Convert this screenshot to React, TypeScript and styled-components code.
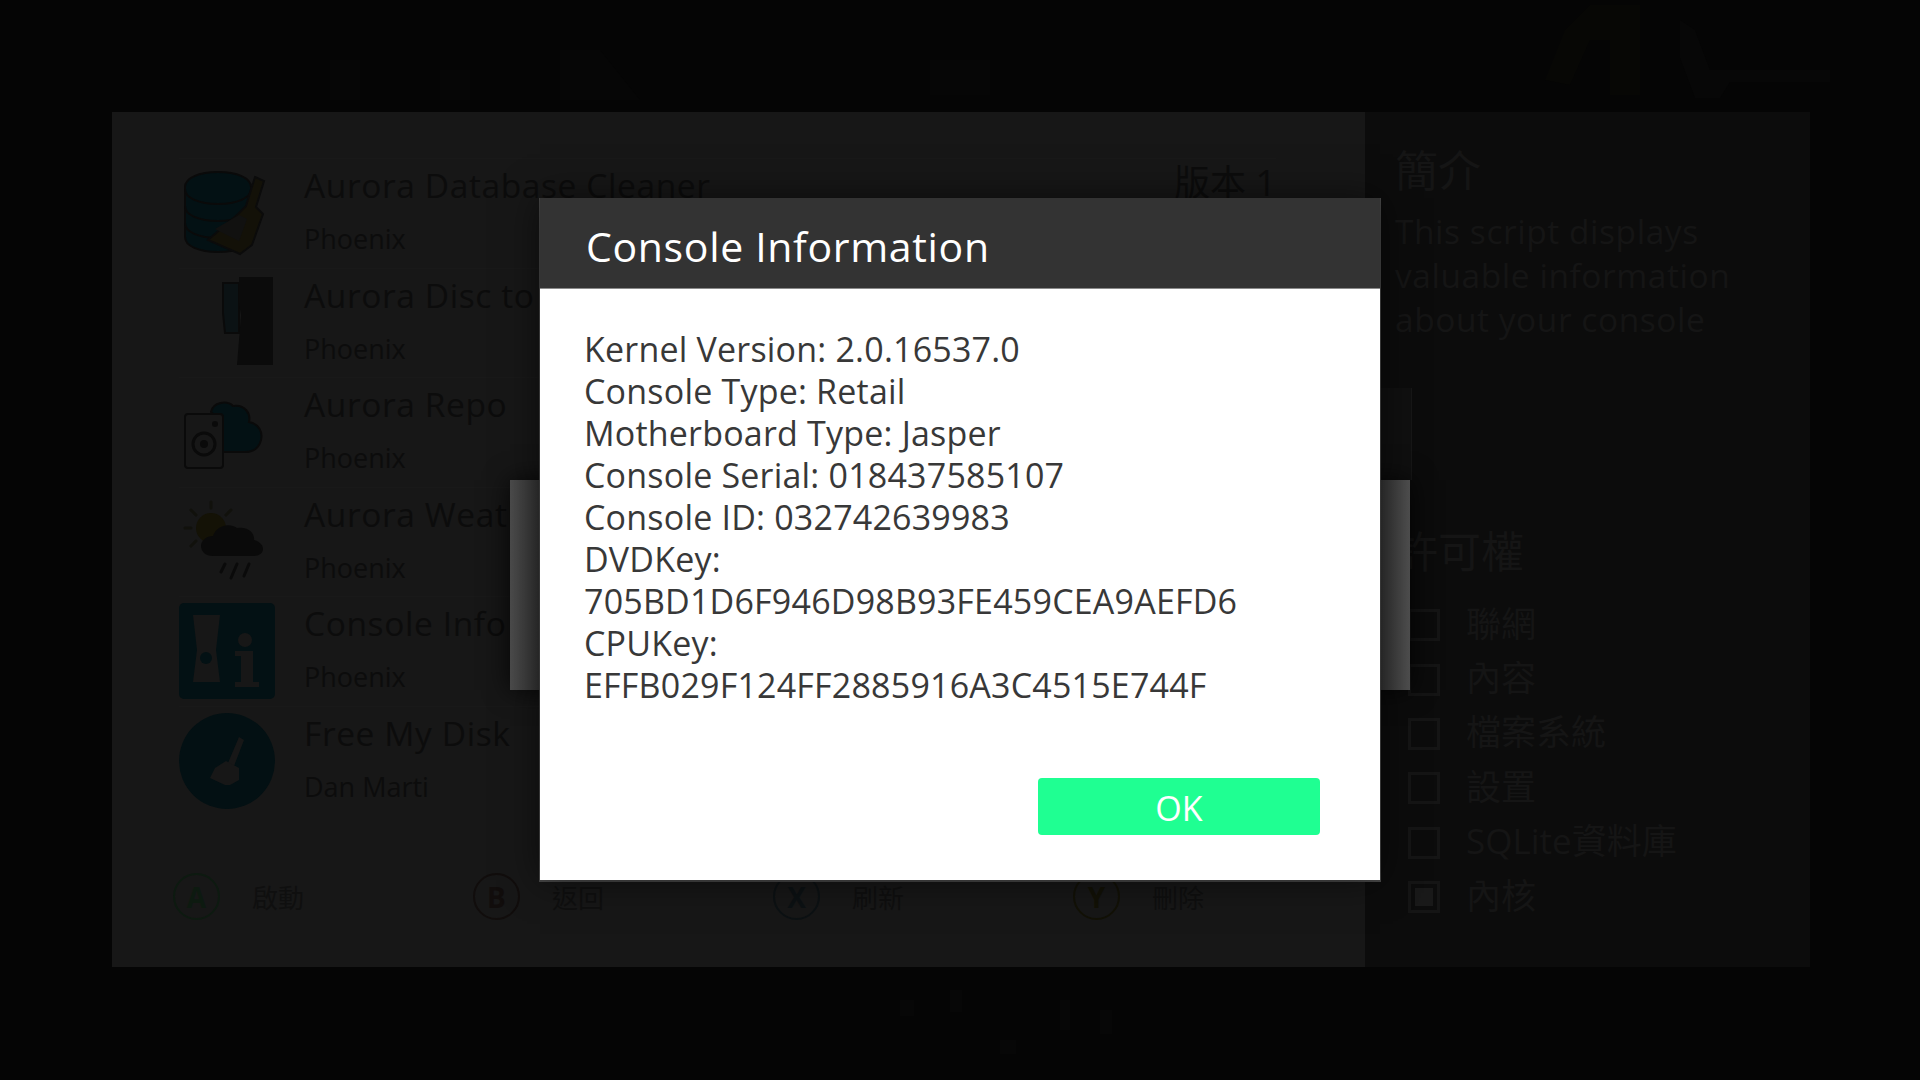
import React from "react";
import styled, { createGlobalStyle } from "styled-components";

const UI_FONT = `"Open Sans", "Noto Sans CJK TC", sans-serif`;

const GlobalStyle = createGlobalStyle`
  html, body {
    margin: 0;
    padding: 0;
    width: 1920px;
    height: 1080px;
    overflow: hidden;
    background: #040404;
  }
  #root {
    width: 1920px;
    height: 1080px;
  }
`;

const Screen = styled.div`
  position: relative;
  display: flex;
  width: 1920px;
  height: 1080px;
  box-sizing: border-box;
  padding: 112px 110px 113px 112px;
  background: #050505;
  font-family: ${UI_FONT};
  overflow: hidden;
`;

const BackdropArt = styled.svg`
  position: absolute;
  top: 0;
  left: 0;
  width: 1920px;
  height: 1080px;
`;

const ScriptsPanel = styled.section`
  position: relative;
  display: flex;
  flex-direction: column;
  width: 1253px;
  box-sizing: border-box;
  padding: 46px 89px 0 67px;
  background: #171717;
`;

const ScriptList = styled.div`
  display: flex;
  flex-direction: column;
`;

const ScriptRow = styled.div`
  display: flex;
  align-items: flex-start;
  height: 109.5px;
  box-sizing: border-box;
  border-top: 1px solid #191919;
`;

const ScriptIcon = styled.div`
  flex: none;
  width: 96px;
  height: 96px;
  margin-top: 6px;
  svg {
    display: block;
    width: 96px;
    height: 96px;
  }
`;

const ScriptText = styled.div`
  flex: 1;
  min-width: 0;
  margin-left: 29px;
`;

const ScriptTitle = styled.div`
  font-size: 33.5px;
  line-height: 52px;
  color: #0c0c0c;
  letter-spacing: 0.6px;
  white-space: nowrap;
`;

const ScriptAuthor = styled.div`
  margin-top: 2px;
  font-size: 27px;
  line-height: 52px;
  color: #0c0c0c;
`;

const ScriptVersion = styled.div`
  flex: none;
  font-size: 36px;
  line-height: 48px;
  color: #0c0c0c;
`;

const HintBar = styled.div`
  display: flex;
  flex: none;
  width: 1200px;
  margin: 58px 0 0 -6px;
`;

const Hint = styled.div`
  display: flex;
  flex: none;
  align-items: center;
  gap: 32px;
  width: 300px;
`;

const HintCircle = styled.div<{ $tint: string }>`
  display: flex;
  align-items: center;
  justify-content: center;
  width: 47px;
  height: 47px;
  box-sizing: border-box;
  border: 2px solid ${(p) => p.$tint};
  border-radius: 50%;
  color: ${(p) => p.$tint};
  font-size: 28px;
  font-weight: 700;
`;

const HintLabel = styled.span`
  font-size: 26px;
  color: #0f0f0f;
`;

const DetailsPanel = styled.aside`
  display: flex;
  flex-direction: column;
  width: 445px;
  box-sizing: border-box;
  padding: 36px 20px 0 30px;
  background: #0c0c0c;
  color: #151515;
  position: relative;
`;

const DetailsHeading = styled.h2<{ $gap?: number }>`
  margin: ${(p) => p.$gap ?? 0}px 0 0;
  font-size: 43px;
  line-height: 46px;
  font-weight: 400;
`;

const Description = styled.p`
  margin: 15px 0 0;
  font-size: 33.5px;
  line-height: 44px;
  letter-spacing: 0.55px;
  white-space: nowrap;
`;

const Permissions = styled.div`
  display: flex;
  flex-direction: column;
  margin: 22px 0 0 13px;
`;

const Permission = styled.div`
  display: flex;
  align-items: center;
  gap: 26px;
  height: 54.4px;
  font-size: 35px;
`;

const PermissionLabel = styled.span`
  line-height: 46px;
  margin-bottom: 1px;
`;

const CheckBox = styled.div<{ $on?: boolean }>`
  display: flex;
  align-items: center;
  justify-content: center;
  width: 32px;
  height: 32px;
  margin-top: 2px;
  box-sizing: border-box;
  border: 3px solid #151515;
  &::after {
    content: "";
    display: ${(p) => (p.$on ? "block" : "none")};
    width: 18px;
    height: 18px;
    background: #191919;
  }
`;

const DialogLayer = styled.div`
  position: absolute;
  top: 198px;
  left: 540px;
  z-index: 2;
`;

const GlowBand = styled.div`
  position: absolute;
  top: 282px;
  left: -30px;
  right: -30px;
  height: 210px;
  background: linear-gradient(90deg, #4c4c4c 0, #333 30px, #333 calc(100% - 30px), #4f4f4f 100%);
  box-shadow: 0 0 24px rgba(0, 0, 0, 0.75);
`;

const UpperBand = styled.div`
  position: absolute;
  top: 190px;
  left: 0;
  right: -32px;
  height: 92px;
  background: #101010;
  border-right: 1px solid #171717;
`;

const Dialog = styled.div`
  position: relative;
  display: flex;
  flex-direction: column;
  width: 840px;
  height: 682px;
  box-sizing: border-box;
  box-shadow: 0 0 36px rgba(0, 0, 0, 0.55), 0 1px 0 1px #4a4a4a;
  background: #fff;
`;

const DialogHeader = styled.header`
  display: flex;
  align-items: center;
  height: 91px;
  flex: none;
  box-sizing: border-box;
  padding: 6px 46px 0;
  background: #333;
  border-bottom: 1px solid #8a8a8a;
`;

const DialogTitle = styled.h1`
  margin: 0;
  font-size: 41px;
  line-height: 60px;
  font-weight: 400;
  color: #fff;
  letter-spacing: 0.66px;
`;

const DialogBody = styled.div`
  flex: 1;
  padding: 39px 0 0 44px;
  font-size: 34px;
  line-height: 42px;
  letter-spacing: 0.2px;
  color: #383838;
`;

const InfoLine = styled.div`
  white-space: nowrap;
`;

const DialogFooter = styled.footer`
  display: flex;
  justify-content: flex-end;
  flex: none;
  padding: 0 60px 45px 0;
`;

const OkButton = styled.button`
  width: 282px;
  height: 57px;
  padding: 3px 0 0;
  border: none;
  border-radius: 4px;
  background: #1fff92;
  color: #fff;
  font-family: ${UI_FONT};
  font-size: 34px;
  line-height: 54px;
`;

const DatabaseIcon = () => (
  <svg viewBox="0 0 96 96">
    <path d="M6 22c0-9 14-15 33-15s33 6 33 15v50c0 9-14 15-33 15S6 81 6 72z" fill="#031114" stroke="#0a0a0a" strokeWidth="2" />
    <path d="M6 24c0 9 14 15 33 15s33-6 33-15M6 41c0 9 14 15 33 15s33-6 33-15M6 58c0 9 14 15 33 15s33-6 33-15" fill="none" stroke="#0a0a0a" strokeWidth="2" />
    <path d="M76 12l9 4-8 26 7 7-11 31-12 9-32-14 30-26 8-8z" fill="#131108" stroke="#0b0b0b" strokeWidth="2" />
    <path d="M36 64l24-14 8 4-8 22z" fill="#111110" />
  </svg>
);

const DiscIcon = () => (
  <svg viewBox="0 0 96 96">
    <path d="M44 8l16 0 0 50-14 0-2-20z" fill="#0b1214" stroke="#0a0a0a" strokeWidth="2" />
    <path d="M60 2h34v88H58l4-50-2-12z" fill="#0b0b0b" />
  </svg>
);

const ReportIcon = () => (
  <svg viewBox="0 0 96 96">
    <path d="M32 28c2-10 16-12 22-6 12-2 18 8 16 16 10 2 14 10 12 18-2 8-8 12-16 12H44V40z" fill="#031114" stroke="#0a0a0a" strokeWidth="2" />
    <rect x="6" y="30" width="38" height="54" rx="3" fill="#171717" stroke="#0a0a0a" strokeWidth="2" />
    <circle cx="25" cy="60" r="11" fill="none" stroke="#0a0a0a" strokeWidth="3" />
    <circle cx="25" cy="60" r="4" fill="#0a0a0a" />
    <circle cx="36" cy="40" r="3" fill="#0a0a0a" />
  </svg>
);

const WeatherIcon = () => (
  <svg viewBox="0 0 96 96">
    <circle cx="32" cy="34" r="15" fill="#141206" />
    <g stroke="#11110c" strokeWidth="3" strokeLinecap="round">
      <path d="M32 8v6M12 16l5 5M6 34h6M12 52l5-5M52 16l-5 5" />
    </g>
    <path d="M34 62c-8 0-12-5-12-10s5-10 12-10c3-10 16-14 24-8 12-2 18 6 17 12 7 2 9 6 9 9 0 4-4 7-9 7z" fill="#0a0a0a" />
    <path d="M46 70l-4 8M58 70l-6 14M70 70l-5 12" stroke="#0a0a0a" strokeWidth="3" strokeLinecap="round" />
  </svg>
);

const InfoIcon = () => (
  <svg viewBox="0 0 96 96">
    <rect width="96" height="96" rx="5" fill="#031114" />
    <path d="M14 12h27l-4 35 4 32H14l4-32z" fill="#171717" />
    <circle cx="27" cy="55" r="6" fill="#031114" />
    <circle cx="66" cy="37" r="7" fill="#171717" />
    <path d="M56 48h18v31h6v5H56v-5h6V53h-6z" fill="#171717" />
  </svg>
);

const BroomIcon = () => (
  <svg viewBox="0 0 96 96">
    <circle cx="48" cy="48" r="48" fill="#031013" />
    <path d="M60 24l5 3-10 26-6-3z" fill="#171717" />
    <path d="M47 48l13 7 0 12-9 5-5 0-15-7 5-10z" fill="#171717" />
  </svg>
);

const scripts = [
  { title: "Aurora Database Cleaner", author: "Phoenix", Icon: DatabaseIcon, version: "版本 1" },
  { title: "Aurora Disc to", author: "Phoenix", Icon: DiscIcon },
  { title: "Aurora Repo", author: "Phoenix", Icon: ReportIcon },
  { title: "Aurora Weather", author: "Phoenix", Icon: WeatherIcon },
  { title: "Console Info", author: "Phoenix", Icon: InfoIcon },
  { title: "Free My Disk", author: "Dan Marti", Icon: BroomIcon },
];

const hints = [
  { key: "A", label: "啟動", tint: "#0d1a10" },
  { key: "B", label: "返回", tint: "#110d0c" },
  { key: "X", label: "刷新", tint: "#0c1113" },
  { key: "Y", label: "刪除", tint: "#121106" },
];

const permissions = [
  { label: "聯網" },
  { label: "內容" },
  { label: "檔案系統" },
  { label: "設置" },
  { label: "SQLite資料庫" },
  { label: "內核", on: true },
];

const consoleInfo = [
  "Kernel Version: 2.0.16537.0",
  "Console Type: Retail",
  "Motherboard Type: Jasper",
  "Console Serial: 018437585107",
  "Console ID: 032742639983",
  "DVDKey:",
  "705BD1D6F946D98B93FE459CEA9AEFD6",
  "CPUKey:",
  "EFFB029F124FF2885916A3C4515E744F",
];

export default function App() {
  return (
    <>
      <GlobalStyle />
      <Screen>
        <BackdropArt viewBox="0 0 1920 1080">
          <path d="M1545 80l20-50 25-25 50 0v90h-30V40h-20l-20 45z" fill="#070705" />
          <path d="M1680 20l15 10 15 40h120v12h-100l-10 16h-25l-15-40z" fill="#070707" />
          <path d="M330 60h30v40h-30zM440 70h30v30h-30zM560 50h40l40 50h-80zM930 60h60v35h-60z" fill="#060606" />
          <path d="M900 1000h14v16h-14zM950 990h12v22h-12zM1000 1040h16v14h-16zM1060 1000h10v30h-10zM1100 1010h12v24h-12z" fill="#070707" />
        </BackdropArt>
        <ScriptsPanel>
          <ScriptList>
            {scripts.map(({ title, author, Icon, version }) => (
              <ScriptRow key={title}>
                <ScriptIcon>
                  <Icon />
                </ScriptIcon>
                <ScriptText>
                  <ScriptTitle>{title}</ScriptTitle>
                  <ScriptAuthor>{author}</ScriptAuthor>
                </ScriptText>
                {version && <ScriptVersion>{version}</ScriptVersion>}
              </ScriptRow>
            ))}
          </ScriptList>
          <HintBar>
            {hints.map((hint) => (
              <Hint key={hint.key}>
                <HintCircle $tint={hint.tint}>{hint.key}</HintCircle>
                <HintLabel>{hint.label}</HintLabel>
              </Hint>
            ))}
          </HintBar>
        </ScriptsPanel>
        <DetailsPanel>
          <DetailsHeading>簡介</DetailsHeading>
          <Description>
            This script displays
            <br />
            valuable information
            <br />
            about your console
          </Description>
          <DetailsHeading $gap={188}>許可權</DetailsHeading>
          <Permissions>
            {permissions.map((item) => (
              <Permission key={item.label}>
                <CheckBox $on={item.on} />
                <PermissionLabel>{item.label}</PermissionLabel>
              </Permission>
            ))}
          </Permissions>
        </DetailsPanel>
        <DialogLayer>
          <UpperBand />
          <GlowBand />
          <Dialog>
            <DialogHeader>
              <DialogTitle>Console Information</DialogTitle>
            </DialogHeader>
            <DialogBody>
              {consoleInfo.map((line) => (
                <InfoLine key={line}>{line}</InfoLine>
              ))}
            </DialogBody>
            <DialogFooter>
              <OkButton>OK</OkButton>
            </DialogFooter>
          </Dialog>
        </DialogLayer>
      </Screen>
    </>
  );
}
